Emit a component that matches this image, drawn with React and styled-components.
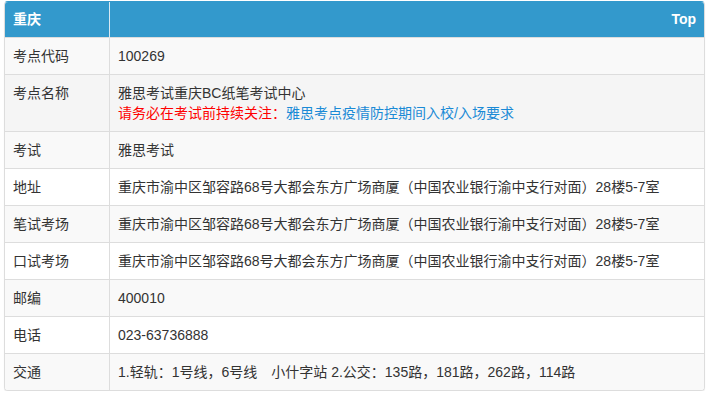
import React from "react";
import styled, { createGlobalStyle } from "styled-components";

const Global = createGlobalStyle`
  html, body { margin: 0; padding: 0; background: #fff; }
  body { font-family: "Liberation Sans", "Noto Sans CJK SC", sans-serif; font-size: 14px; color: #333; }
`;

const Page = styled.div`
  padding: 1px 4px 0 4px;
`;

const Panel = styled.div`
  border: 1px solid #ddd;
  border-top-color: #3399cc;
  border-radius: 4px;
  overflow: hidden;
  box-shadow: 0 1px 1px rgba(0, 0, 0, 0.08);
  width: 701px;
  box-sizing: border-box;
`;

const Table = styled.table`
  width: 100%;
  border-collapse: collapse;
  border-spacing: 0;
`;

const HeadCell = styled.th`
  background: #3399cc;
  color: #fff;
  font-weight: bold;
  font-size: 14px;
  line-height: 20px;
  height: 35px;
  padding: 7px 8px 8px;
  text-align: ${(p) => (p.$right ? "right" : "left")};
  border-left: ${(p) => (p.$right ? "1px solid #d8e9f3" : "none")};
  box-sizing: border-box;
`;

const Row = styled.tr`
  background: ${(p) => (p.$tone === "hover" ? "#f5f5f5" : p.$tone === "odd" ? "#f9f9f9" : "#fff")};
`;

const Label = styled.td`
  width: 88px;
  padding: 8px;
  line-height: 20px;
  border-top: 1px solid #ddd;
  vertical-align: top;
  white-space: nowrap;
`;

const Value = styled.td`
  padding: 8px;
  line-height: 20px;
  border-top: 1px solid #ddd;
  border-left: 1px solid #ddd;
  vertical-align: top;
`;

const Warn = styled.span`
  color: #ff0000;
`;

const Link = styled.a`
  color: #1a8ad6;
  text-decoration: none;
`;

const addr = "重庆市渝中区邹容路68号大都会东方广场商厦（中国农业银行渝中支行对面）28楼5-7室";

export default function App() {
  return (
    <Page>
      <Global />
      <Panel>
        <Table>
          <thead>
            <tr>
              <HeadCell>重庆</HeadCell>
              <HeadCell $right>Top</HeadCell>
            </tr>
          </thead>
          <tbody>
            <Row $tone="odd">
              <Label>考点代码</Label>
              <Value>100269</Value>
            </Row>
            <Row $tone="hover">
              <Label>考点名称</Label>
              <Value>
                雅思考试重庆BC纸笔考试中心
                <br />
                <Warn>请务必在考试前持续关注：</Warn>
                <Link href="#">雅思考点疫情防控期间入校/入场要求</Link>
              </Value>
            </Row>
            <Row $tone="odd">
              <Label>考试</Label>
              <Value>雅思考试</Value>
            </Row>
            <Row>
              <Label>地址</Label>
              <Value>{addr}</Value>
            </Row>
            <Row $tone="odd">
              <Label>笔试考场</Label>
              <Value>{addr}</Value>
            </Row>
            <Row>
              <Label>口试考场</Label>
              <Value>{addr}</Value>
            </Row>
            <Row $tone="odd">
              <Label>邮编</Label>
              <Value>400010</Value>
            </Row>
            <Row>
              <Label>电话</Label>
              <Value>023-63736888</Value>
            </Row>
            <Row $tone="odd">
              <Label>交通</Label>
              <Value>1.轻轨：1号线，6号线　小什字站 2.公交：135路，181路，262路，114路</Value>
            </Row>
          </tbody>
        </Table>
      </Panel>
    </Page>
  );
}
